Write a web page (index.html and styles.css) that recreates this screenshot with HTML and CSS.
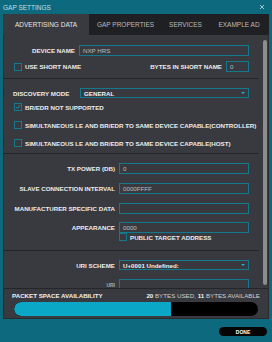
FILE: index.html
```html
<!DOCTYPE html>
<html>
<head>
<meta charset="utf-8">
<link rel="stylesheet" href="styles.css">
</head>
<body>
<div class="window">
  <div class="titlebar">
    <span class="title">GAP SETTINGS</span>
    <svg class="close" width="6" height="6" viewBox="0 0 6 6"><path d="M1 1L5 5M5 1L1 5" stroke="#9fc6cf" stroke-width="1"/></svg>
  </div>
  <div class="panel">
    <div class="tabs">
      <div class="tab active t1">ADVERTISING DATA</div>
      <div class="tab t2">GAP PROPERTIES</div>
      <div class="tab t3">SERVICES</div>
      <div class="tab t4">EXAMPLE AD</div>
    </div>
    <div class="body">
      <div class="content">
        <div class="row r-device">
          <span class="lbl w71">DEVICE NAME</span>
          <div class="input w170">NXP HRS</div>
        </div>
        <div class="row r-short">
          <span class="cb"></span>
          <span class="cbtext">USE SHORT NAME</span>
          <span class="spacer"></span>
          <span class="lbl">BYTES IN SHORT NAME</span>
          <div class="input w23">0</div>
        </div>
        <div class="divider d1"></div>
        <div class="row r-disc">
          <span class="lbl left w67">DISCOVERY MODE</span>
          <div class="select w169"><span>GENERAL</span><span class="arrow"></span></div>
        </div>
        <div class="row cbrow r-bredr">
          <span class="cb checked"><svg width="8" height="8" viewBox="0 0 8 8"><path d="M1.5 4.2L3.2 6L6.8 1.6" fill="none" stroke="#17a7c4" stroke-width="1.1"/></svg></span>
          <span class="cbtext">BR/EDR NOT SUPPORTED</span>
        </div>
        <div class="row cbrow r-sim1">
          <span class="cb"></span>
          <span class="cbtext">SIMULTANEOUS LE AND BR/EDR TO SAME DEVICE CAPABLE(CONTROLLER)</span>
        </div>
        <div class="row cbrow r-sim2">
          <span class="cb"></span>
          <span class="cbtext">SIMULTANEOUS LE AND BR/EDR TO SAME DEVICE CAPABLE(HOST)</span>
        </div>
        <div class="divider d2"></div>
        <div class="row r-tx">
          <span class="lbl w111">TX POWER (DB)</span>
          <div class="input w130">0</div>
        </div>
        <div class="row r-slave">
          <span class="lbl w111">SLAVE CONNECTION INTERVAL</span>
          <div class="input w130">0000FFFF</div>
        </div>
        <div class="row r-manu">
          <span class="lbl w111">MANUFACTURER SPECIFIC DATA</span>
          <div class="input w130"></div>
        </div>
        <div class="row r-app">
          <span class="lbl w111">APPEARANCE</span>
          <div class="input w130">0000</div>
        </div>
        <div class="row cbrow r-pub">
          <span class="cb"></span>
          <span class="cbtext">PUBLIC TARGET ADDRESS</span>
        </div>
        <div class="divider d3"></div>
        <div class="row r-uris">
          <span class="lbl w111">URI SCHEME</span>
          <div class="select w130"><span>U+0001 Undefined:</span><span class="arrow"></span></div>
        </div>
        <div class="row r-uri">
          <span class="lbl w111 small">URI</span>
          <div class="input w130"></div>
        </div>
      </div>
      <div class="scrollcol"><div class="thumb"></div></div>
    </div>
    <div class="packet">
      <div class="phead">
        <span class="ptitle">PACKET SPACE AVAILABILITY</span>
        <span class="pinfo"><b>20</b> BYTES USED, <b>11</b> BYTES AVAILABLE</span>
      </div>
      <div class="bar"><div class="fill" style="width:64.5%"></div></div>
    </div>
  </div>
  <div class="footer">
    <div class="done">DONE</div>
  </div>
</div>
</body>
</html>
```

FILE: styles.css
```css
* { box-sizing: border-box; }
html, body { margin: 0; padding: 0; }
body {
  background: #0d6a7e;
  font-family: "Liberation Sans", Arial, sans-serif;
  font-size: 6.5px;
  color: #e6e6e6;
  width: 272px;
  height: 342px;
  overflow: hidden;
}
.window { display: flex; flex-direction: column; height: 342px; }
.titlebar {
  height: 14px;
  display: flex;
  align-items: center;
  justify-content: space-between;
  padding: 1px 7px 1px 3px;
}
.title { color: #c4dfe5; font-size: 6.5px; }
.close { display: block; }
.panel {
  margin: 0 3px;
  background: #393a3f;
  border: 1px solid #2a2b2f;
  border-top: none;
  display: flex;
  flex-direction: column;
  height: 305px;
}
.tabs { height: 21px; background: #1f2023; display: flex; margin: 0 -1px; }
.tab {
  display: flex; align-items: center; justify-content: center;
  color: #b9babd; font-size: 6.5px;
}
.tab.active { background: #393a3f; color: #e4e4e4; }
.t1 { width: 86px; }
.t2 { width: 73px; }
.t3 { width: 47px; }
.t4 { width: 60px; }
.body { height: 253px; display: flex; }
.content { flex: 1; overflow: hidden; }
.scrollcol { width: 7px; }
.thumb { margin: 5px 0 0 2px; width: 4px; height: 245px; background: #8d8d8f; border-radius: 2px; }
.row { display: flex; align-items: center; height: 11px; width: 245px; }
.lbl { font-weight: bold; font-size: 6.2px; color: #ececec; text-align: right; white-space: nowrap; padding-right: 4px; }
.lbl.left { text-align: left; margin-left: 9px; }
.lbl.small { font-size: 5px; color: #aaa; }
.w71 { width: 75px; }
.w67 { width: 67px; }
.w111 { width: 115px; }
.input, .select {
  height: 11px;
  border: 1px solid #14798d;
  color: #bdbdbd;
  padding-left: 3px;
  display: flex; align-items: center;
  white-space: nowrap;
  font-size: 6.2px;
}
.select { height: 10px; color: #f0f0f0; font-weight: bold; justify-content: space-between; padding-right: 3px; }
.arrow { width: 0; height: 0; border-left: 2px solid transparent; border-right: 2px solid transparent; border-top: 2.5px solid #1ab3d2; }
.w170 { width: 170px; }
.w169 { width: 169px; }
.w130 { width: 130px; }
.w23 { width: 23px; }
.spacer { flex: 1; }
.cb { width: 8px; height: 8px; border: 1px solid #14798d; margin-left: 10px; flex: none; display: flex; align-items: center; justify-content: center; }
.cb svg { display: block; }
.cbtext { font-weight: bold; font-size: 6.2px; color: #ececec; margin-left: 3px; white-space: nowrap; }
.r-device { margin-top: 10px; }
.r-short { margin-top: 5px; }
.divider { height: 1px; background: #232428; margin-right: 2px; }
.d1 { margin-top: 6px; }
.r-disc { margin-top: 9px; height: 10px; }
.cbrow { height: 8px; width: auto; }
.r-bredr { margin-top: 5px; }
.r-sim1 { margin-top: 10px; }
.r-sim2 { margin-top: 10px; }
.d2 { margin-top: 6px; }
.r-tx { margin-top: 9px; }
.r-slave { margin-top: 9px; }
.r-manu { margin-top: 9px; }
.r-app { margin-top: 8px; }
.r-pub .cb { margin-left: 115px; }
.d3 { margin-top: 9px; }
.r-uris { margin-top: 9px; height: 10px; }
.r-uri { margin-top: 9px; }
.packet { border-top: 1px solid #25262a; padding: 2px 8px 2px 8px; }
.phead { display: flex; justify-content: space-between; align-items: center; height: 8px; }
.ptitle { font-weight: bold; font-size: 6.2px; color: #f0f0f0; }
.pinfo { color: #cfcfcf; font-size: 6.2px; }
.pinfo b { color: #f4f4f4; }
.bar { margin: 3px 2px 0 2px; height: 14px; background: #000; border-radius: 7px; overflow: hidden; }
.fill { height: 100%; background: #0aa7c6; border-radius: 7px 0 0 7px; }
.footer { display: flex; justify-content: flex-end; padding: 8px 5px 0 0; }
.done { width: 48px; height: 9px; background: #050505; border-radius: 5px; color: #fff; font-size: 5px; font-weight: bold; display: flex; align-items: center; justify-content: center; }
```
